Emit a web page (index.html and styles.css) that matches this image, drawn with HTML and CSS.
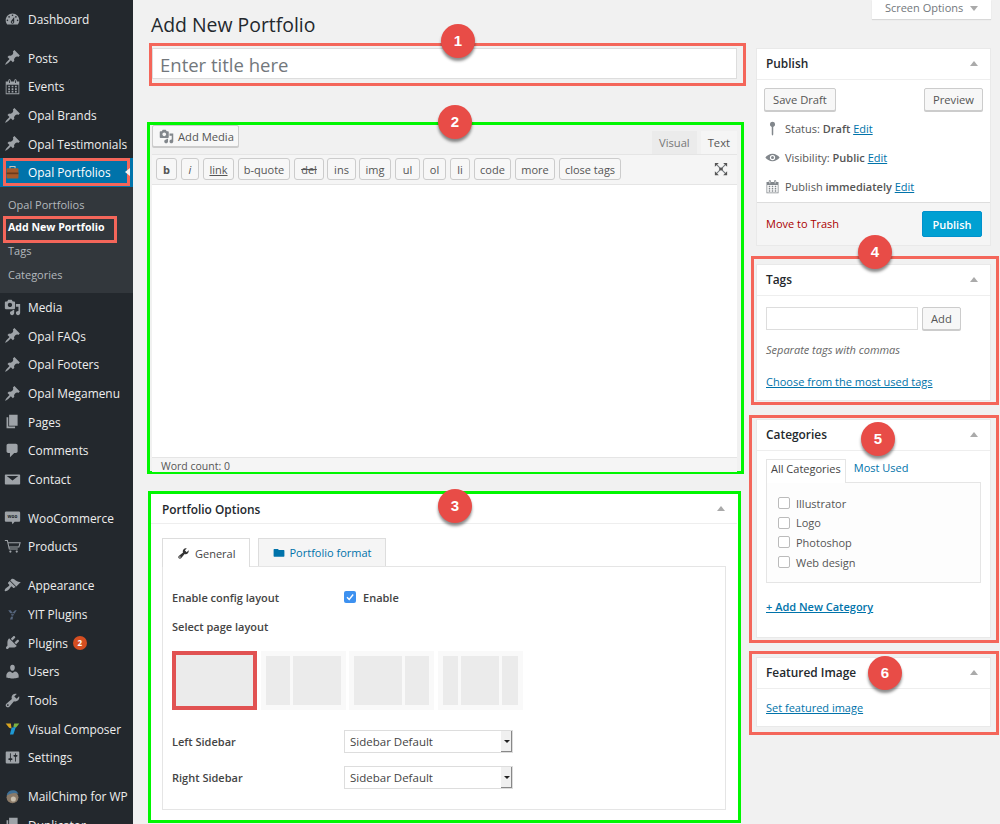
FILE: index.html
```html
<!DOCTYPE html>
<html lang="en">
<head>
    <meta charset="UTF-8">
    <meta name="viewport" content="width=device-width, initial-scale=1.0">
    <title>Add New Portfolio</title>
    <link rel="stylesheet" href="styles.css">
</head>
<body>
<svg class="defs" width="0" height="0">
    <symbol id="i-pin" viewBox="0 0 20 20"><path d="M10.44 3.02l1.82-1.82 6.36 6.35-1.83 1.82c-1.05-.68-2.48-.57-3.41.36l-.75.75c-.92.93-1.04 2.35-.35 3.41l-1.83 1.82-2.41-2.41-2.8 2.79c-.42.42-3.38 2.71-3.8 2.29s1.86-3.39 2.28-3.81l2.79-2.79L4.1 9.36l1.83-1.82c1.05.69 2.48.57 3.4-.36l.75-.75c.93-.92 1.05-2.35.36-3.41z"/></symbol>
    <symbol id="i-dash" viewBox="0 0 20 20"><path d="M3.76 16h12.48c1.1-1.37 1.76-3.11 1.76-5 0-4.42-3.58-8-8-8s-8 3.58-8 8c0 1.89.66 3.63 1.76 5zM10 4c.55 0 1 .45 1 1s-.45 1-1 1-1-.45-1-1 .45-1 1-1zM6 6c.55 0 1 .45 1 1s-.45 1-1 1-1-.45-1-1 .45-1 1-1zm8 0c.55 0 1 .45 1 1s-.45 1-1 1-1-.45-1-1 .45-1 1-1zm-5.37 5.55L12 7v6c0 1.1-.9 2-2 2s-2-.9-2-2c0-.57.24-1.08.63-1.45zM4 10c.55 0 1 .45 1 1s-.45 1-1 1-1-.45-1-1 .45-1 1-1zm12 0c.55 0 1 .45 1 1s-.45 1-1 1-1-.45-1-1 .45-1 1-1zm-5 3c0-.55-.45-1-1-1s-1 .45-1 1 .45 1 1 1 1-.45 1-1z"/></symbol>
    <symbol id="i-cal" viewBox="0 0 20 20"><path d="M15 4h3v15H2V4h3V3c0-.41.15-.76.44-1.06.29-.29.65-.44 1.06-.44s.77.15 1.06.44c.29.3.44.65.44 1.06v1h4V3c0-.41.15-.76.44-1.06.29-.29.65-.44 1.06-.44s.77.15 1.06.44c.29.3.44.65.44 1.06v1zM6 3v2.5c0 .14.05.26.15.36.09.09.21.14.35.14s.26-.05.35-.14c.1-.1.15-.22.15-.36V3c0-.14-.05-.26-.15-.35-.09-.1-.21-.15-.35-.15s-.26.05-.35.15c-.1.09-.15.21-.15.35zm7 0v2.5c0 .14.05.26.14.36.1.09.22.14.36.14s.26-.05.36-.14c.09-.1.14-.22.14-.36V3c0-.14-.05-.26-.14-.35-.1-.1-.22-.15-.36-.15s-.26.05-.36.15c-.09.09-.14.21-.14.35zm4 15V8H3v10h14zM7 9v2H5V9h2zm2 0h2v2H9V9zm4 2V9h2v2h-2zm-6 1v2H5v-2h2zm2 0h2v2H9v-2zm4 2v-2h2v2h-2zm-6 1v2H5v-2h2zm4 2H9v-2h2v2zm4 0h-2v-2h2v2z"/></symbol>
    <symbol id="i-media" viewBox="0 0 20 20"><path d="M13 11V4c0-.55-.45-1-1-1h-1.67L9 1H5L3.67 3H2c-.55 0-1 .45-1 1v7c0 .55.45 1 1 1h10c.55 0 1-.45 1-1zM7 4.5c1.38 0 2.5 1.12 2.5 2.5S8.38 9.5 7 9.5 4.5 8.38 4.5 7 5.62 4.5 7 4.5zM14 6h5v10.5c0 1.38-1.12 2.5-2.5 2.5S14 17.88 14 16.5s1.12-2.5 2.5-2.5c.17 0 .34.02.5.05V9h-3V6zm-4 8.05V13h2v3.5c0 1.38-1.12 2.5-2.5 2.5S7 17.88 7 16.5 8.12 14 9.5 14c.17 0 .34.02.5.05z"/></symbol>
    <symbol id="i-pages" viewBox="0 0 20 20"><path d="M6 15V2h10v13H6zm-1 1h8v2H3V5h2v11z"/></symbol>
    <symbol id="i-comment" viewBox="0 0 20 20"><path d="M5 2h9c1.1 0 2 .9 2 2v7c0 1.1-.9 2-2 2h-2l-5 5v-5H5c-1.1 0-2-.9-2-2V4c0-1.1.9-2 2-2z"/></symbol>
    <symbol id="i-mail" viewBox="0 0 20 20"><path d="M2 4h16c.6 0 1 .4 1 1v10c0 .6-.4 1-1 1H2c-.6 0-1-.4-1-1V5c0-.6.4-1 1-1zm1.2 2L10 11.2 16.8 6H3.2z"/></symbol>
    <symbol id="i-cart" viewBox="0 0 20 20"><path fill="none" stroke="currentColor" stroke-width="1.200" d="M1 3h3l2.200 10h10M4.600 5.500H19l-1.500 5H5.700"/><circle cx="7.500" cy="16" r="1.300"/><circle cx="15" cy="16" r="1.300"/></symbol>
    <symbol id="i-brush" viewBox="0 0 20 20"><path d="M14.480 11.060L7.410 3.990l1.500-1.500c.5-.56 2.300-.47 3.510.32 1.210.8 1.430 1.280 2.910 2.100 1.180.64 2.450 1.260 4.450.85zm-.71.71L6.700 4.700 4.930 6.470c-.39.39-.39 1.020 0 1.410l1.060 1.060c.39.39.39 1.030 0 1.420-.6.6-1.430 1.110-2.210 1.690-.35.26-.7.53-1.010.84C1.430 13.230.28 15.790 1 16.500c.7.71 3.260-.44 4.600-1.770.3-.31.58-.66.84-1.010.58-.78 1.090-1.610 1.690-2.210.39-.39 1.020-.39 1.410 0l1.060 1.060c.39.39 1.020.39 1.410 0z"/></symbol>
    <symbol id="i-plug" viewBox="0 0 20 20"><path d="M13.110 4.360L9.870 7.600 8 5.730l3.240-3.240c.35-.34 1.050-.2 1.560.32.52.51.66 1.210.31 1.550zm-8 1.770l.91-1.120 9.010 9.010-1.190.84c-.71.71-2.630 1.160-3.820 1.160H6.140L4.900 17.260c-.59.59-1.540.59-2.120 0-.59-.58-.59-1.530 0-2.120l1.240-1.240v-3.880c0-1.130.4-3.190 1.090-3.890zm7.260 3.970l3.240-3.240c.34-.35 1.040-.21 1.550.31.52.51.66 1.210.31 1.550l-3.240 3.250z"/></symbol>
    <symbol id="i-user" viewBox="0 0 20 20"><path d="M10 9.250c-2.270 0-2.730-3.440-2.730-3.440C7 4.020 7.820 2 9.970 2c2.160 0 2.980 2.020 2.710 3.810 0 0-.41 3.440-2.680 3.440zm0 2.570L12.720 10c2.390 0 4.520 2.330 4.520 4.530v2.490s-3.650 1.130-7.240 1.130c-3.650 0-7.240-1.130-7.240-1.130v-2.490c0-2.250 1.940-4.480 4.470-4.480z"/></symbol>
    <symbol id="i-tool" viewBox="0 0 20 20"><path d="M16.680 9.770c-1.340 1.340-3.300 1.670-4.950.99l-5.410 6.520c-.99.99-2.590.99-3.580 0s-.99-2.590 0-3.570l6.520-5.420c-.68-1.650-.35-3.610.99-4.950 1.280-1.280 3.120-1.620 4.720-1.060l-2.890 2.890 2.820 2.820 2.860-2.870c.53 1.580.18 3.390-1.080 4.650zM3.810 16.210c.4.39 1.040.39 1.430 0 .4-.4.4-1.040 0-1.430-.39-.4-1.030-.4-1.430 0-.39.39-.39 1.030 0 1.430z"/></symbol>
    <symbol id="i-set" viewBox="0 0 20 20"><path d="M18 16V4c0-.55-.45-1-1-1H3c-.55 0-1 .45-1 1v12c0 .55.45 1 1 1h14c.55 0 1-.45 1-1zM8 11h1c.55 0 1 .45 1 1s-.45 1-1 1H8v1.500c0 .28-.22.5-.5.5s-.5-.22-.5-.5V13H6c-.55 0-1-.45-1-1s.45-1 1-1h1V5.500c0-.28.22-.5.5-.5s.5.22.5.5V11zm5-2h-1c-.55 0-1-.45-1-1s.45-1 1-1h1V5.500c0-.28.22-.5.5-.5s.5.22.5.5V7h1c.55 0 1 .45 1 1s-.45 1-1 1h-1v5.500c0 .28-.22.5-.5.5s-.5-.22-.5-.5V9z"/></symbol>
    <symbol id="i-eye" viewBox="0 0 20 20"><path d="M10 5c4 0 7.500 2.500 9.500 5-2 2.500-5.500 5-9.500 5s-7.500-2.500-9.500-5C2.500 7.500 6 5 10 5zm0 1.500a3.500 3.500 0 1 0 0 7 3.500 3.500 0 0 0 0-7zM10 8a2 2 0 1 1 0 4 2 2 0 0 1 0-4z" fill-rule="evenodd"/></symbol>
    <symbol id="i-status" viewBox="0 0 20 20"><path d="M10 1a3.500 3.500 0 0 1 1 6.850V18l-1 1.500L9 18V7.850A3.500 3.500 0 0 1 10 1z"/></symbol>
</svg>

<div class="wrap">
    <nav class="sidebar">
        <a class="item"><svg class="ico"><use href="#i-dash"/></svg>Dashboard</a>
        <div class="sep"></div>
        <a class="item"><svg class="ico"><use href="#i-pin"/></svg>Posts</a>
        <a class="item"><svg class="ico"><use href="#i-cal"/></svg>Events</a>
        <a class="item"><svg class="ico"><use href="#i-pin"/></svg>Opal Brands</a>
        <a class="item"><svg class="ico"><use href="#i-pin"/></svg>Opal Testimonials</a>
        <a class="item active">
            <svg class="ico" viewBox="0 0 20 20"><rect x="3" y="5" width="14" height="12" rx="1" fill="#a65a2a"/><rect x="3" y="10" width="14" height="2" fill="#6b3a1c"/><path d="M7 5V3h6v2" fill="none" stroke="#c9c2ba" stroke-width="1.200"/></svg>
            Opal Portfolios
        </a>
        <div class="submenu">
            <a>Opal Portfolios</a>
            <a class="current">Add New Portfolio</a>
            <a>Tags</a>
            <a>Categories</a>
        </div>
        <a class="item"><svg class="ico"><use href="#i-media"/></svg>Media</a>
        <a class="item"><svg class="ico"><use href="#i-pin"/></svg>Opal FAQs</a>
        <a class="item"><svg class="ico"><use href="#i-pin"/></svg>Opal Footers</a>
        <a class="item"><svg class="ico"><use href="#i-pin"/></svg>Opal Megamenu</a>
        <a class="item"><svg class="ico"><use href="#i-pages"/></svg>Pages</a>
        <a class="item"><svg class="ico"><use href="#i-comment"/></svg>Comments</a>
        <a class="item"><svg class="ico"><use href="#i-mail"/></svg>Contact</a>
        <div class="sep"></div>
        <a class="item">
            <svg class="ico" viewBox="0 0 20 20"><path d="M2.500 3h15C18.300 3 19 3.700 19 4.500v9c0 .8-.7 1.500-1.500 1.500h-5l-2.500 3-1-3h-6.500C1.700 15 1 14.300 1 13.500v-9C1 3.700 1.700 3 2.500 3z"/><text class="woo-mark" x="10" y="11">woo</text></svg>
            WooCommerce
        </a>
        <a class="item"><svg class="ico"><use href="#i-cart"/></svg>Products</a>
        <div class="sep"></div>
        <a class="item"><svg class="ico"><use href="#i-brush"/></svg>Appearance</a>
        <a class="item">
            <svg class="ico" viewBox="0 0 20 20"><path d="M5 5h3l2 3 3-3h2l-4 6-1 5H7l2-5z" fill="#56657c"/><path d="M6 9h6M6 12h5" stroke="#23282d"/></svg>
            YIT Plugins
        </a>
        <a class="item"><svg class="ico"><use href="#i-plug"/></svg>Plugins <span class="count">2</span></a>
        <a class="item"><svg class="ico"><use href="#i-user"/></svg>Users</a>
        <a class="item"><svg class="ico"><use href="#i-tool"/></svg>Tools</a>
        <a class="item">
            <svg class="ico" viewBox="0 0 20 20"><path d="M2 4h6l1 6-3-1z" fill="#d9a520"/><path d="M12 4h6l-4 5-3-1z" fill="#7cb342"/><path d="M9 9l5-1-3 9H7z" fill="#1e9ad6"/></svg>
            Visual Composer
        </a>
        <a class="item"><svg class="ico"><use href="#i-set"/></svg>Settings</a>
        <div class="sep"></div>
        <a class="item">
            <svg class="ico" viewBox="0 0 20 20"><circle cx="10" cy="11" r="7" fill="#8a7a68"/><path d="M3 9c1-5 5-7 10-6 2 .5 3 2 4 4-4-2-9-1-14 2z" fill="#3d6f96"/><circle cx="11" cy="13" r="3" fill="#c9bfae"/></svg>
            MailChimp for WP
        </a>
        <a class="item"><svg class="ico"><use href="#i-pages"/></svg>Duplicator</a>
    </nav>

    <main class="content">
        <div class="main-col">
            <h1>Add New Portfolio</h1>

            <div class="mark red title-mark">
                <input class="title-input" type="text" placeholder="Enter title here">
                <span class="badge badge-1">1</span>
            </div>

            <div class="mark green editor-mark">
                <span class="badge badge-2">2</span>
                <div class="editor-top">
                    <button class="btn media-btn"><svg class="ico-sm"><use href="#i-media"/></svg>Add Media</button>
                    <div class="editor-tabs">
                        <span class="etab">Visual</span>
                        <span class="etab on">Text</span>
                    </div>
                </div>
                <div class="quicktags">
                    <button class="qt qt-b">b</button>
                    <button class="qt qt-i">i</button>
                    <button class="qt qt-link">link</button>
                    <button class="qt qt-quote">b-quote</button>
                    <button class="qt qt-del">del</button>
                    <button class="qt qt-ins">ins</button>
                    <button class="qt qt-img">img</button>
                    <button class="qt qt-ul">ul</button>
                    <button class="qt qt-ol">ol</button>
                    <button class="qt qt-li">li</button>
                    <button class="qt qt-code">code</button>
                    <button class="qt qt-more">more</button>
                    <button class="qt qt-close">close tags</button>
                    <svg class="fullscreen" viewBox="0 0 16 16"><path d="M3 3l10 10M13 3L3 13" stroke="#72777c" stroke-width="1.200"/><path d="M1 1h4.500L1 5.500zM15 1v4.500L10.500 1zM1 15v-4.500L5.500 15zM15 15h-4.500L15 10.500z"/><rect x="6" y="6.500" width="4" height="3"/></svg>
                </div>
                <div class="editor-body"></div>
                <div class="word-count">Word count: 0</div>
            </div>

            <div class="mark green options-mark">
                <span class="badge badge-3">3</span>
                <div class="panel-head options-head">Portfolio Options <i class="caret"></i></div>
                <div class="options-body">
                    <div class="opt-tabs">
                        <span class="opt-tab on"><svg class="ico-tab"><use href="#i-tool"/></svg>General</span>
                        <span class="opt-tab off"><svg class="ico-tab folder" viewBox="0 0 20 20"><path d="M1 5c0-.6.4-1 1-1h6l2 2h8c.6 0 1 .4 1 1v9c0 .6-.4 1-1 1H2c-.6 0-1-.4-1-1z" fill="#0073aa"/></svg>Portfolio format</span>
                    </div>
                    <div class="opt-panel">
                        <div class="opt-row row-enable">
                            <label>Enable config layout</label>
                            <span class="check-wrap"><span class="check-on"><svg viewBox="0 0 12 12"><path d="M3 6.200l2.200 2.300L9.200 3.500" fill="none" stroke="#fff" stroke-width="1.400"/></svg></span>Enable</span>
                        </div>
                        <div class="opt-row row-layout"><label>Select page layout</label></div>
                        <div class="layouts">
                            <div class="thumb selected"><b class="fill"></b></div>
                            <div class="thumb"><b class="w24"></b><b class="w48"></b></div>
                            <div class="thumb"><b class="w49"></b><b class="w25"></b></div>
                            <div class="thumb"><b class="w16"></b><b class="w41"></b><b class="w16"></b></div>
                        </div>
                        <div class="opt-row row-left">
                            <label>Left Sidebar</label>
                            <div class="select">Sidebar Default<span class="arrow"></span></div>
                        </div>
                        <div class="opt-row row-right">
                            <label>Right Sidebar</label>
                            <div class="select">Sidebar Default<span class="arrow"></span></div>
                        </div>
                    </div>
                </div>
            </div>
        </div>

        <aside class="side-col">
            <div class="screen-options">Screen Options <i class="caret down"></i></div>

            <div class="panel publish">
                <div class="panel-head">Publish <i class="caret"></i></div>
                <div class="publish-actions">
                    <button class="btn">Save Draft</button>
                    <button class="btn preview">Preview</button>
                </div>
                <div class="pub-line line-status"><svg class="ico-pub"><use href="#i-status"/></svg>Status: <b>Draft</b> <a>Edit</a></div>
                <div class="pub-line"><svg class="ico-pub"><use href="#i-eye"/></svg>Visibility: <b>Public</b> <a>Edit</a></div>
                <div class="pub-line"><svg class="ico-pub"><use href="#i-cal"/></svg>Publish <b>immediately</b> <a>Edit</a></div>
                <div class="publish-foot">
                    <a class="trash">Move to Trash</a>
                    <button class="btn primary">Publish</button>
                </div>
            </div>

            <div class="mark red tags-mark">
                <span class="badge badge-4">4</span>
                <div class="panel inner-panel">
                    <div class="panel-head">Tags <i class="caret"></i></div>
                    <div class="panel-body">
                        <div class="tag-form">
                            <input class="tag-input" type="text">
                            <button class="btn">Add</button>
                        </div>
                        <p class="hint">Separate tags with commas</p>
                        <a class="link">Choose from the most used tags</a>
                    </div>
                </div>
            </div>

            <div class="mark red cats-mark">
                <span class="badge badge-5">5</span>
                <div class="panel inner-panel">
                    <div class="panel-head">Categories <i class="caret"></i></div>
                    <div class="panel-body">
                        <div class="cat-tabs">
                            <span class="cat-tab on">All Categories</span>
                            <a class="cat-tab">Most Used</a>
                        </div>
                        <ul class="cat-list">
                            <li><i class="box"></i>Illustrator</li>
                            <li><i class="box"></i>Logo</li>
                            <li><i class="box"></i>Photoshop</li>
                            <li><i class="box"></i>Web design</li>
                        </ul>
                        <a class="link strong">+ Add New Category</a>
                    </div>
                </div>
            </div>

            <div class="mark red image-mark">
                <span class="badge badge-6">6</span>
                <div class="panel inner-panel">
                    <div class="panel-head">Featured Image <i class="caret"></i></div>
                    <div class="panel-body image-body"><a class="link">Set featured image</a></div>
                </div>
            </div>
        </aside>
    </main>
</div>
</body>
</html>
```

FILE: styles.css
```css
* {
    box-sizing: border-box;
}

html, body {
    margin: 0;
    height: 824px;
    overflow: hidden;
}

body {
    font-family: "Open Sans", sans-serif;
    font-size: 11.5px;
    color: #444;
    background-color: #f1f1f1;
}

.defs {
    position: absolute;
}

.wrap {
    display: flex;
    height: 824px;
    overflow: hidden;
}

/* left admin menu */
.sidebar {
    width: 133px;
    flex: none;
    padding-top: 4.5px;
    background-color: #23282d;
    overflow: hidden;
}

.sep {
    height: 10px;
}

.item {
    position: relative;
    display: flex;
    align-items: center;
    height: 28.7px;
    padding-left: 28px;
    font-size: 11.9px;
    color: #eee;
    white-space: nowrap;
}

.ico {
    position: absolute;
    left: 4px;
    top: 6px;
    width: 17px;
    height: 17px;
    fill: #9ea3a8;
    color: #9ea3a8;
}

.woo-mark {
    fill: #23282d;
    font-size: 5.5px;
    font-weight: 700;
    text-anchor: middle;
}

.active {
    background-color: #0073aa;
    color: #fff;
}

.active::after {
    content: "";
    position: absolute;
    left: 3px;
    right: 3px;
    top: 0;
    bottom: 1px;
    border: 3px solid #f4665a;
}

.active::before {
    content: "";
    position: absolute;
    z-index: 1;
    right: 3px;
    top: 10px;
    border: 4px solid transparent;
    border-right: 5px solid #f1f1f1;
    border-left: 0;
}

.submenu {
    display: flex;
    flex-direction: column;
    height: 106px;
    padding-top: 6px;
    background-color: #32373c;
}

.submenu a {
    height: 23.4px;
    padding-left: 8px;
    font-size: 11px;
    line-height: 23px;
    color: #b4b9be;
}

.submenu .current {
    position: relative;
    font-size: 10.6px;
    font-weight: 700;
    color: #fff;
}

.submenu .current::after {
    content: "";
    position: absolute;
    left: 3px;
    top: 0;
    width: 108px;
    height: 21px;
    border: 3px solid #f4665a;
}

.count {
    display: inline-block;
    width: 14px;
    height: 14px;
    margin-left: 5px;
    border-radius: 50%;
    background-color: #d54e21;
    color: #fff;
    font-size: 8px;
    font-weight: 700;
    line-height: 14px;
    text-align: center;
}

/* page columns */
.content {
    display: flex;
    flex: 1;
    min-width: 0;
}

.main-col {
    width: 602px;
    margin-left: 14px;
    flex: none;
}

.side-col {
    width: 251px;
    flex: none;
}

h1 {
    height: 43px;
    margin: 0 0 0 4px;
    font-size: 19.4px;
    font-weight: 400;
    line-height: 50px;
    color: #23282d;
}

/* annotations */
.mark {
    position: relative;
    border: 3px solid;
}

.red {
    border-color: #f4665a;
}

.green {
    border-color: #00f600;
}

.badge {
    position: absolute;
    z-index: 2;
    width: 34px;
    height: 34px;
    border-radius: 50%;
    background-color: #e84c47;
    box-shadow: 0 3px 3px rgba(0, 0, 0, 0.45);
    color: #fff;
    font-family: "Liberation Sans", sans-serif;
    font-size: 15px;
    font-weight: 700;
    line-height: 34px;
    text-align: center;
}

.badge-1 { left: 289px; top: -22px; }
.badge-2 { left: 288px; top: -20px; }
.badge-3 { left: 287px; top: -5px; }
.badge-4 { left: 104px; top: -24px; }
.badge-5 { left: 109px; top: 4px; }
.badge-6 { left: 116px; top: 2px; }

.title-mark {
    width: 597px;
    height: 43px;
    margin-left: 2px;
    padding: 2px 6px 4px 0;
}

.title-input {
    display: block;
    width: 100%;
    height: 31px;
    padding: 2px 7px 0;
    border: 1px solid #ddd;
    background-color: #fff;
    font-family: inherit;
    font-size: 18.5px;
    outline: 0;
}

.title-input::placeholder {
    color: #72777c;
}

/* buttons */
button {
    font-family: inherit;
}

.btn {
    height: 23px;
    padding: 0 8px;
    border: 1px solid #ccc;
    border-radius: 2px;
    background-color: #f7f7f7;
    box-shadow: 0 1px 0 #ccc;
    font-size: 11.2px;
    color: #555;
}

.preview {
    width: 59px;
    padding: 0;
}

.primary {
    width: 60px;
    height: 26px;
    border-color: #0091cd;
    background-color: #00a0d2;
    box-shadow: none;
    font-size: 11px;
    font-weight: 600;
    color: #fff;
}

/* editor */
.editor-mark {
    width: 597px;
    height: 352px;
    margin-top: 36px;
    padding-left: 2px;
    padding-right: 4px;
}

.editor-top {
    display: flex;
    justify-content: space-between;
    align-items: flex-end;
    height: 29px;
}

.media-btn {
    display: flex;
    align-items: center;
    width: 87px;
    height: 22px;
    margin-bottom: 7px;
    padding: 0 6px;
    white-space: nowrap;
}

.ico-sm {
    width: 15px;
    height: 15px;
    flex: none;
    margin-right: 4px;
    fill: #82878c;
}

.editor-tabs {
    display: flex;
    gap: 4px;
    height: 23px;
}

.etab {
    padding: 0 7px;
    background-color: #ebebeb;
    font-size: 11.2px;
    line-height: 23px;
    color: #777;
}

.etab.on {
    background-color: #f5f5f5;
    color: #555;
}

.quicktags {
    display: flex;
    align-items: center;
    gap: 4px;
    height: 31px;
    padding-left: 4px;
    padding-bottom: 1px;
    border-top: 1px solid #e5e5e5;
    border-bottom: 1px solid #e5e5e5;
    background-color: #f5f5f5;
}

.qt {
    height: 22px;
    padding: 0;
    border: 1px solid #ccc;
    border-radius: 3px;
    background-color: #f7f7f7;
    font-size: 11px;
    color: #555;
}

.qt-b { width: 21px; font-weight: 700; }
.qt-i { width: 18px; font-style: italic; }
.qt-link { width: 31px; text-decoration: underline; }
.qt-quote { width: 52px; }
.qt-del { width: 30px; text-decoration: line-through; }
.qt-ins { width: 29px; margin-left: -1px; }
.qt-img { width: 32px; margin-left: -1px; }
.qt-ul { width: 25px; }
.qt-ol { width: 23px; margin-left: -1px; }
.qt-li { width: 20px; }
.qt-code { width: 37px; }
.qt-more { width: 40px; }
.qt-close { width: 62px; }

.fullscreen {
    width: 14px;
    height: 14px;
    margin-left: auto;
    margin-right: 9px;
    fill: #555;
}

.editor-body {
    height: 272px;
    background-color: #fff;
}

.word-count {
    height: 15px;
    padding-left: 9px;
    border-top: 1px solid #e5e5e5;
    background-color: #f5f5f5;
    font-size: 10.5px;
    line-height: 17px;
    color: #555;
}

/* portfolio options */
.options-mark {
    width: 593px;
    height: 332px;
    margin-top: 17px;
    margin-left: 1px;
    padding-right: 1px;
    background-color: #fff;
}

.panel-head {
    position: relative;
    height: 31px;
    padding-left: 9px;
    border-bottom: 1px solid #eee;
    font-size: 11.9px;
    font-weight: 600;
    line-height: 28px;
    color: #23282d;
}

.options-head {
    height: 30px;
    padding-left: 11px;
    line-height: 30px;
}

.caret {
    position: absolute;
    right: 12px;
    top: 12px;
    border: 4px solid transparent;
    border-top: 0;
    border-bottom: 5px solid #aaa;
}

.caret.down {
    position: static;
    display: inline-block;
    margin-left: 4px;
    border-top: 5px solid #aaa;
    border-bottom: 0;
    vertical-align: 1px;
}

.options-body {
    padding: 14px 11px 0 11px;
}

.opt-tabs {
    display: flex;
    gap: 8px;
    height: 29px;
}

.opt-tab {
    display: flex;
    align-items: center;
    position: relative;
    z-index: 1;
    height: 28px;
    padding: 0 14px 0 14px;
    border: 1px solid #ddd;
    border-bottom: 0;
    background-color: #f5f5f5;
    font-size: 11px;
}

.opt-tab.on {
    height: 29px;
    background-color: #fff;
}

.opt-tab.off {
    padding-right: 13px;
    color: #0073aa;
}

.ico-tab {
    width: 13px;
    height: 13px;
    margin-right: 5px;
    fill: #333;
}

.ico-tab.folder {
    width: 12px;
    margin-right: 4px;
}

.opt-panel {
    height: 244px;
    margin-top: -1px;
    padding: 0 9px;
    border: 1px solid #e5e5e5;
}

.opt-row {
    display: flex;
    align-items: center;
    height: 28.7px;
}

.opt-row label {
    width: 172px;
    flex: none;
    font-size: 11px;
    font-weight: 600;
    color: #444;
}

.row-enable {
    margin-top: 16px;
}

.check-wrap {
    display: flex;
    align-items: center;
    font-size: 11px;
    font-weight: 600;
}

.check-on {
    width: 12px;
    height: 12px;
    margin-right: 7px;
    border-radius: 2px;
    background-color: #3d91f0;
}

.check-on svg {
    display: block;
}

.layouts {
    display: flex;
    gap: 3.5px;
    margin-top: 11px;
    height: 59px;
}

.thumb {
    display: flex;
    gap: 3px;
    width: 85px;
    padding: 5px;
    background-color: #f9f9f9;
}

.thumb b {
    display: block;
    background-color: #ebebeb;
}

.thumb.selected {
    padding: 0;
    border: 4px solid #e15252;
}

.fill { flex: 1; }
.w24 { width: 24px; }
.w48 { width: 48px; }
.w49 { width: 49px; }
.w25 { width: 25px; }
.w16 { width: 16px; }
.w41 { width: 41px; }

.row-left {
    margin-top: 20px;
    height: 23px;
}

.row-right {
    margin-top: 13px;
    height: 23px;
}

.select {
    position: relative;
    width: 169px;
    height: 23px;
    padding-left: 5px;
    border: 1px solid #ddd;
    background-color: #fff;
    font-size: 11.5px;
    line-height: 21px;
    color: #444;
}

.arrow {
    position: absolute;
    right: 0;
    top: 0;
    bottom: 0;
    width: 11px;
    background-color: #f0f0f0;
    border-right: 1px solid #888;
    border-bottom: 1px solid #888;
}

.arrow::after {
    content: "";
    position: absolute;
    left: 3px;
    top: 9px;
    border: 3px solid transparent;
    border-top: 3px solid #222;
    border-bottom: 0;
}

/* right column */
.screen-options {
    width: 119px;
    height: 19px;
    margin-left: 123px;
    background-color: #fff;
    box-shadow: 0 1px 1px rgba(0, 0, 0, 0.1);
    font-size: 11px;
    line-height: 15px;
    text-align: center;
    color: #72777c;
}

.panel {
    background-color: #fff;
    border: 1px solid #e9e9e9;
}

.publish {
    position: relative;
    width: 235px;
    height: 198px;
    margin-top: 29px;
    margin-left: 7px;
}

.publish-actions {
    display: flex;
    justify-content: space-between;
    padding: 8px 7px 0 7px;
}

.pub-line {
    position: relative;
    height: 29px;
    padding-left: 28px;
    font-size: 11px;
    line-height: 29px;
    color: #555;
}

.line-status {
    margin-top: 3px;
}

.pub-line b {
    font-weight: 600;
}

.pub-line a,
.link {
    color: #0073aa;
    text-decoration: underline;
}

.ico-pub {
    position: absolute;
    left: 8px;
    top: 7px;
    width: 15px;
    height: 15px;
    fill: #82878c;
}

.publish-foot {
    position: absolute;
    left: 0;
    right: 0;
    bottom: 0;
    display: flex;
    justify-content: space-between;
    align-items: center;
    height: 43px;
    padding: 0 8px 0 9px;
    border-top: 1px solid #ddd;
    background-color: #f5f5f5;
}

.trash {
    margin-top: -2px;
    font-size: 11px;
    color: #a00;
}

.tags-mark {
    width: 248px;
    height: 149px;
    margin-top: 10px;
    margin-left: 2px;
    padding: 5px 4px 1px 2px;
}

.inner-panel {
    height: 100%;
    margin-right: 1px;
}

.panel-body {
    padding: 11px 9px;
    font-size: 11px;
}

.tag-form {
    display: flex;
    gap: 4px;
}

.tag-input {
    width: 152px;
    height: 23px;
    border: 1px solid #ddd;
}

.hint {
    margin: 12px 0 16px;
    font-size: 11px;
    font-style: italic;
    line-height: 16px;
    color: #666;
}

.cats-mark {
    width: 250px;
    height: 228px;
    margin-top: 10px;
    padding: 1px 4px 2px 4px;
}

.cat-tabs {
    display: flex;
    height: 23px;
    margin-top: -3px;
}

.cat-tab {
    padding: 0 4px;
    font-size: 11px;
    line-height: 17px;
    color: #0073aa;
}

.cat-tab.on {
    position: relative;
    z-index: 1;
    height: 24px;
    border: 1px solid #e5e5e5;
    border-bottom: 0;
    background-color: #fff;
    color: #444;
}

.cat-tab + .cat-tab {
    margin-left: 4px;
}

.cat-list {
    height: 101px;
    margin: 0 0 16px;
    padding: 10.5px 0 0 11px;
    list-style: none;
    border: 1px solid #e5e5e5;
    background-color: #fdfdfd;
    font-size: 11px;
    color: #555;
}

.cat-list li {
    display: flex;
    align-items: center;
    height: 19.6px;
}

.box {
    width: 12px;
    height: 12px;
    margin-right: 6px;
    border: 1px solid #bbb;
    border-radius: 2px;
    background-color: #fff;
}

.strong {
    font-weight: 600;
}

.image-mark {
    width: 250px;
    height: 84px;
    margin-top: 8px;
    padding: 3px 4px 5px 4px;
}

.image-body {
    padding-top: 11px;
}
```
